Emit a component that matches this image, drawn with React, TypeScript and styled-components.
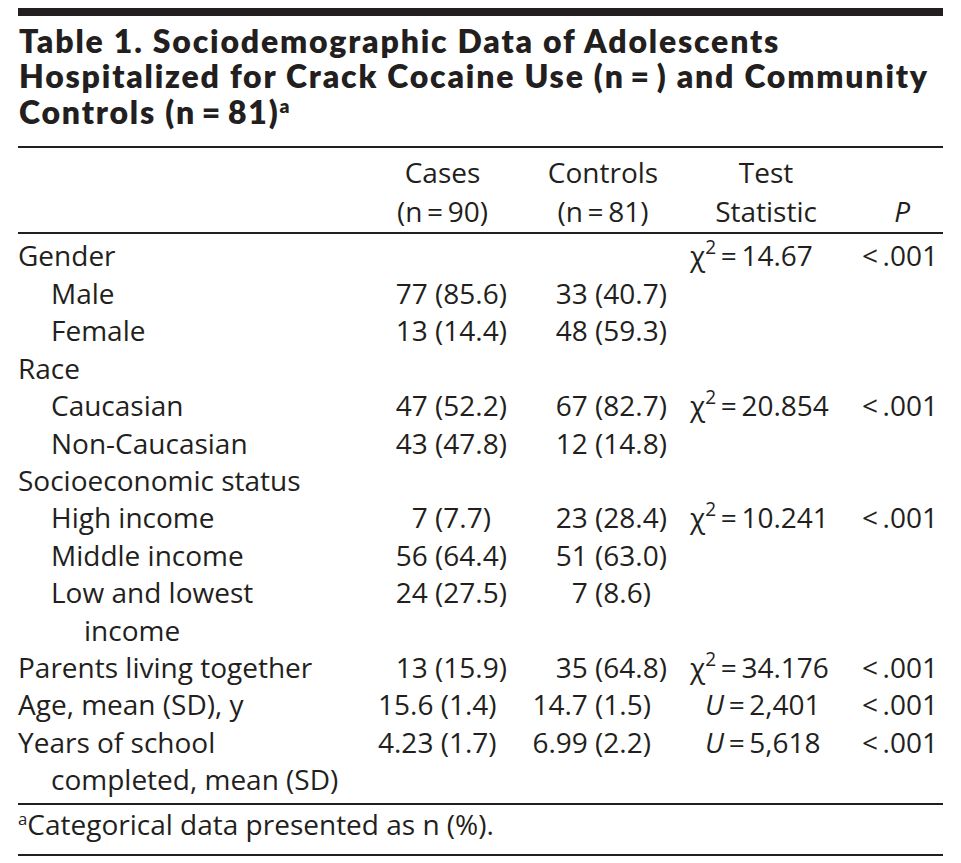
import React from 'react';
import styled, { createGlobalStyle } from 'styled-components';

const ink = '#231f20';
const THIN = '\u2009';

const GlobalStyle = createGlobalStyle`
  html, body {
    margin: 0;
    padding: 0;
    background: #fff;
  }
  body {
    font-family: 'Open Sans', 'Noto Sans', 'Liberation Sans', sans-serif;
    color: ${ink};
  }
`;

const Page = styled.div`
  width: 925px;
  padding: 8px 18px 0;
`;

const TopBar = styled.div`
  height: 8px;
  background: ${ink};
`;

const Title = styled.h1`
  margin: 6.6px 0 0;
  padding: 0 0 16.9px 1px;
  font-family: Lato, 'Open Sans', sans-serif;
  font-size: 32px;
  font-weight: 800;
  line-height: 35.5px;
  letter-spacing: 1.8px;
  white-space: nowrap;
`;

const TitleSup = styled.sup`
  font-size: 0.6em;
  line-height: 0;
  vertical-align: 11px;
  letter-spacing: 0;
`;

const Rule = styled.div`
  height: 2px;
  background: ${ink};
`;

const Sup = styled.sup<{ $size?: number }>`
  font-size: ${(p) => p.$size ?? 0.6}em;
  line-height: 0;
  vertical-align: 0.62em;
  letter-spacing: 0;
`;

const Grid = styled.div`
  display: grid;
  grid-template-columns: 360px 129px 183px 152px 101px;
  align-items: start;
  font-size: 28px;
`;

const HeadRow = styled(Grid)`
  padding: 4.6px 0 1.4px;
  line-height: 39px;
`;

const HeadCell = styled.div<{ $align?: 'left' | 'center' | 'right'; $shift?: number }>`
  text-align: ${(p) => p.$align ?? 'center'};
  padding-left: ${(p) => Math.max(p.$shift ?? 0, 0)}px;
  padding-right: ${(p) => Math.max(-(p.$shift ?? 0), 0)}px;
  white-space: nowrap;
`;

const Body = styled.div`
  padding: 3.5px 0 4.7px;
`;

const Row = styled(Grid)`
  line-height: 37.4px;
`;

const Label = styled.div<{ $level: number }>`
  padding-left: ${(p) => p.$level * 33 + 33}px;
  text-indent: -33px;
`;

const Num = styled.div<{ $pad: number }>`
  text-align: right;
  padding-right: ${(p) => p.$pad}px;
  white-space: nowrap;
`;

const Stat = styled.div<{ $indent: number }>`
  padding-left: ${(p) => p.$indent}px;
  white-space: nowrap;
`;

const PValue = styled.div`
  text-align: right;
  padding-right: 5px;
  white-space: nowrap;
`;

const Italic = styled.i`
  font-style: italic;
`;

const Footnote = styled.div`
  font-size: 28px;
  line-height: 37.2px;
  padding: 0.5px 0 11px;
`;

type StatData = { kind: 'chi' | 'U'; value: string };

type RowData = {
  label: string[];
  level: number;
  cases?: string;
  casesShort?: boolean;
  controls?: string;
  controlsShort?: boolean;
  stat?: StatData;
  p?: string;
};

const LESS = '<' + THIN + '.001';

const rows: RowData[] = [
  { label: ['Gender'], level: 0, stat: { kind: 'chi', value: '14.67' }, p: LESS },
  { label: ['Male'], level: 1, cases: '77 (85.6)', controls: '33 (40.7)' },
  { label: ['Female'], level: 1, cases: '13 (14.4)', controls: '48 (59.3)' },
  { label: ['Race'], level: 0 },
  {
    label: ['Caucasian'],
    level: 1,
    cases: '47 (52.2)',
    controls: '67 (82.7)',
    stat: { kind: 'chi', value: '20.854' },
    p: LESS,
  },
  { label: ['Non-Caucasian'], level: 1, cases: '43 (47.8)', controls: '12 (14.8)' },
  { label: ['Socioeconomic status'], level: 0 },
  {
    label: ['High income'],
    level: 1,
    cases: '7 (7.7)',
    casesShort: true,
    controls: '23 (28.4)',
    stat: { kind: 'chi', value: '10.241' },
    p: LESS,
  },
  { label: ['Middle income'], level: 1, cases: '56 (64.4)', controls: '51 (63.0)' },
  {
    label: ['Low and lowest', 'income'],
    level: 1,
    cases: '24 (27.5)',
    controls: '7 (8.6)',
    controlsShort: true,
  },
  {
    label: ['Parents living together'],
    level: 0,
    cases: '13 (15.9)',
    controls: '35 (64.8)',
    stat: { kind: 'chi', value: '34.176' },
    p: LESS,
  },
  {
    label: ['Age, mean (SD), y'],
    level: 0,
    cases: '15.6 (1.4)',
    casesShort: true,
    controls: '14.7 (1.5)',
    controlsShort: true,
    stat: { kind: 'U', value: '2,401' },
    p: LESS,
  },
  {
    label: ['Years of school', 'completed, mean (SD)'],
    level: 0,
    cases: '4.23 (1.7)',
    casesShort: true,
    controls: '6.99 (2.2)',
    controlsShort: true,
    stat: { kind: 'U', value: '5,618' },
    p: LESS,
  },
];

const StatText = ({ stat }: { stat: StatData }) =>
  stat.kind === 'chi' ? (
    <>
      χ<Sup $size={0.68}>2</Sup>
      {THIN + '=' + THIN + stat.value}
    </>
  ) : (
    <>
      <Italic>U</Italic>
      {THIN + '=' + THIN + stat.value}
    </>
  );

const TableRow = ({ row }: { row: RowData }) => (
  <Row>
    <Label $level={row.level}>
      {row.label.map((line, i) => (
        <React.Fragment key={line}>
          {i > 0 && <br />}
          {line}
        </React.Fragment>
      ))}
    </Label>
    <Num $pad={row.casesShort ? 16 : 0}>{row.cases}</Num>
    <Num $pad={row.controlsShort ? 39 : 23}>{row.controls}</Num>
    <Stat $indent={row.stat?.kind === 'U' ? 15 : 0}>
      {row.stat && <StatText stat={row.stat} />}
    </Stat>
    <PValue>{row.p}</PValue>
  </Row>
);

const App = (): JSX.Element => {
  return (
    <Page>
      <GlobalStyle />
      <TopBar />
      <Title>
        Table 1. Sociodemographic Data of Adolescents
        <br />
        {'Hospitalized for Crack Cocaine Use (n' + THIN + '=' + THIN + ') and Community'}
        <br />
        {'Controls (n' + THIN + '=' + THIN + '81)'}
        <TitleSup>a</TitleSup>
      </Title>
      <Rule />
      <HeadRow>
        <div />
        <HeadCell>
          Cases
          <br />
          {'(n' + THIN + '=' + THIN + '90)'}
        </HeadCell>
        <HeadCell $shift={9}>
          Controls
          <br />
          {'(n' + THIN + '=' + THIN + '81)'}
        </HeadCell>
        <HeadCell>
          Test
          <br />
          Statistic
        </HeadCell>
        <HeadCell $align="right" $shift={-33}>
          <br />
          <Italic>P</Italic>
        </HeadCell>
      </HeadRow>
      <Rule />
      <Body>
        {rows.map((row) => (
          <TableRow key={row.label.join(' ')} row={row} />
        ))}
      </Body>
      <Rule />
      <Footnote>
        <Sup>a</Sup>Categorical data presented as n (%).
      </Footnote>
      <Rule />
    </Page>
  );
};

export default App;
